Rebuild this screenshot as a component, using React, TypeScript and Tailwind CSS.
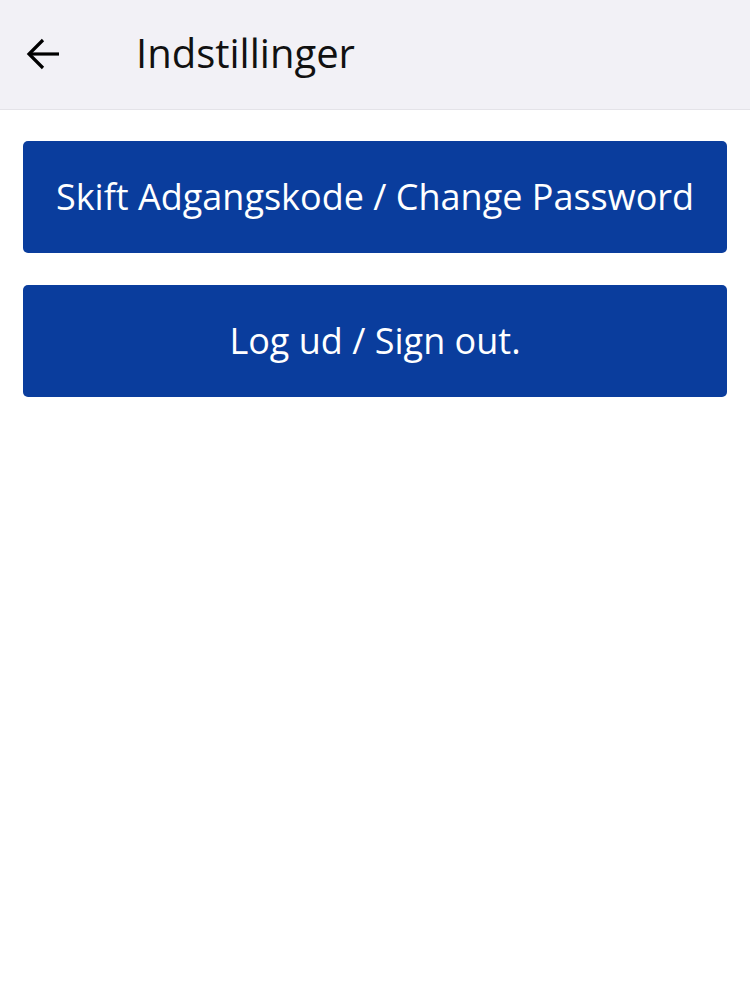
export default function App() {
  return (
    <div className="min-h-[1000px] bg-white" style={{ fontFamily: '"Open Sans", "Noto Sans", sans-serif' }}>
      {/* Header */}
      <div className="flex h-[110px] items-center border-b border-[#e4e3e8] bg-[#f2f1f6]">
        <button className="ml-[25px] flex h-[36px] w-[36px] items-center justify-center text-black">
          <svg width="36" height="36" viewBox="0 0 36 36" fill="none" stroke="currentColor" strokeWidth="3.2" strokeLinecap="butt" strokeLinejoin="miter">
            <path d="M34 17H4" />
            <path d="M18 3L4 17l14 14" />
          </svg>
        </button>
        <h1 className="ml-[75px] pb-[4px] text-[40px] font-normal leading-none text-[#111]">Indstillinger</h1>
      </div>

      {/* Actions */}
      <div className="flex flex-col gap-[32px] px-[23px] pt-[31px]">
        <button className="flex h-[112px] items-center justify-center rounded-[5px] bg-[#0a3d9d] text-[36px] text-white">
          Skift Adgangskode / Change Password
        </button>
        <button className="flex h-[112px] items-center justify-center rounded-[5px] bg-[#0a3d9d] text-[36px] text-white">
          Log ud / Sign out.
        </button>
      </div>
    </div>
  );
}
